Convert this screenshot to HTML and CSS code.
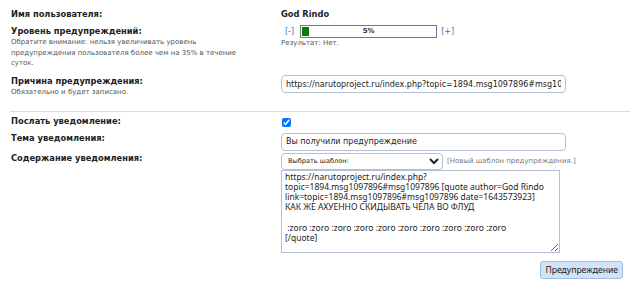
FILE: index.html
```html
<!DOCTYPE html>
<html lang="ru">
<head>
    <meta charset="UTF-8">
    <title>Предупреждение</title>
    <link rel="stylesheet" href="styles.css">
</head>
<body>

    <form class="warn-form" onsubmit="return false;">
        <dl class="settings">
            <dt class="row-name"><strong>Имя пользователя:</strong></dt>
            <dd class="row-name"><b class="member">God Rindo</b></dd>

            <dt class="row-level">
                <strong>Уровень предупреждений:</strong>
                <span class="smalltext">Обратите внимание: нельзя увеличивать уровень предупреждения пользователя более чем на 35% в течение суток.</span>
            </dt>
            <dd class="row-level">
                <div class="level">
                    <a href="#" class="bracket">[-]</a>
                    <div class="level-bar">
                        <div class="level-fill" style="width: 5%;"></div>
                        <span class="level-text">5%</span>
                    </div>
                    <a href="#" class="bracket">[+]</a>
                </div>
                <div class="result">Результат: Нет.</div>
            </dd>

            <dt class="row-reason">
                <strong>Причина предупреждения:</strong>
                <span class="smalltext">Обязательно и будет записано.</span>
            </dt>
            <dd class="row-reason">
                <input type="text" class="field" value="https://narutoproject.ru/index.php?topic=1894.msg1097896#msg1097896">
            </dd>
        </dl>

        <hr class="divider">

        <dl class="settings">
            <dt class="row-notify"><strong>Послать уведомление:</strong></dt>
            <dd class="row-notify"><input type="checkbox" class="check" checked></dd>

            <dt class="row-subject"><strong>Тема уведомления:</strong></dt>
            <dd class="row-subject"><input type="text" class="field" value="Вы получили предупреждение"></dd>

            <dt class="row-body"><strong>Содержание уведомления:</strong></dt>
            <dd class="row-body">
                <div class="template-line">
                    <select class="template">
                        <option>Выбрать шаблон:</option>
                    </select>
                    <a href="#" class="new-template">[Новый шаблон предупреждения.]</a>
                </div>
                <textarea class="message">https://narutoproject.ru/index.php?topic=1894.msg1097896#msg1097896 [quote author=God Rindo link=topic=1894.msg1097896#msg1097896 date=1643573923]
КАК ЖЕ АХУЕННО СКИДЫВАТЬ ЧЕЛА ВО ФЛУД

 :zoro :zoro :zoro :zoro :zoro :zoro :zoro :zoro :zoro :zoro
[/quote]</textarea>
            </dd>
        </dl>

        <div class="righttext">
            <button type="submit" class="submit">Предупреждение</button>
        </div>
    </form>

</body>
</html>
```

FILE: styles.css
```css
body {
    margin: 0;
    background: #fff;
    color: #222;
    font-family: "DejaVu Sans", Verdana, sans-serif;
}
.warn-form {
    padding: 8px 10px 0 11px;
}
.settings {
    display: grid;
    grid-template-columns: 270px 1fr;
    margin: 0;
}
.settings dt,
.settings dd {
    margin: 0;
    font-size: 8px;
    line-height: 12px;
}
.settings strong,
.member {
    display: block;
    font-size: 8.3px;
    line-height: 12px;
    font-weight: bold;
}
.smalltext {
    display: block;
    width: 240px;
    font-size: 7px;
    line-height: 10.5px;
    color: #555;
}

.settings .row-name { margin-bottom: 5px; }
.settings .row-level { margin-bottom: 6.5px; }
.settings .row-notify { margin-bottom: 5px; }
.settings .row-subject { margin-bottom: 1px; }

/* warning level */
.level {
    display: flex;
    align-items: center;
    height: 13px;
    padding-left: 4px;
}
.bracket {
    color: #3d6fc5;
    text-decoration: none;
    font-size: 8px;
}
.level-bar {
    position: relative;
    box-sizing: border-box;
    width: 137px;
    height: 13px;
    margin: 0 4px 0 6px;
    padding: 1px;
    border: 1px solid #777;
    background: #fff;
}
.level-fill {
    height: 9px;
    background: #0a7a0a;
}
.level-text {
    position: absolute;
    left: 0;
    right: 0;
    top: 0;
    text-align: center;
    font-size: 7px;
    font-weight: bold;
    line-height: 11px;
    color: #333;
}
.result {
    font-size: 7px;
    line-height: 10px;
    color: #555;
}

.field {
    box-sizing: border-box;
    display: block;
    width: 285px;
    height: 18px;
    margin: 0;
    padding: 0 4px;
    border: 1px solid #b3c0d4;
    border-radius: 4px;
    font-family: "DejaVu Sans", Verdana, sans-serif;
    font-size: 8px;
    color: #222;
    background: #fff;
}

.divider {
    margin: 13px 0 3px -1px;
    border: none;
    border-top: 1px solid #ddd;
}

.check {
    display: block;
    width: 9px;
    height: 9px;
    margin: 3px 0 0 1px;
}
.row-subject .field { margin-top: 1px; }

.template-line {
    display: flex;
    align-items: center;
    margin-top: 1px;
}
.template {
    box-sizing: border-box;
    width: 162px;
    height: 17px;
    padding: 0 2px;
    border: 1px solid #b3c0d4;
    border-radius: 4px;
    font-family: "DejaVu Sans", Verdana, sans-serif;
    font-size: 6.6px;
    color: #222;
    background: #fff;
}
.new-template {
    margin-left: 4px;
    font-size: 7px;
    color: #777;
    text-decoration: none;
}
.message {
    box-sizing: border-box;
    display: block;
    width: 279px;
    height: 83px;
    margin: 0;
    padding: 1px 3px;
    border: 1px solid #b3c0d4;
    font-family: "Noto Sans", "Open Sans", sans-serif;
    font-size: 8.5px;
    line-height: 10.3px;
    color: #222;
    resize: vertical;
}

.righttext {
    display: flex;
    justify-content: flex-end;
    padding: 8px 7px 0 0;
}
.submit {
    height: 18px;
    padding: 0 4px;
    border: 1px solid #a4bcdb;
    border-radius: 3px;
    background: #cfe3f9;
    font-family: "Noto Sans", "Open Sans", sans-serif;
    font-size: 8.6px;
    color: #222;
    cursor: pointer;
}
```
